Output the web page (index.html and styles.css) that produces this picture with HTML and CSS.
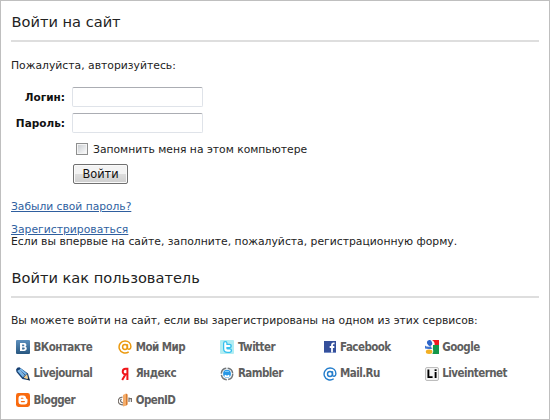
FILE: index.html
```html
<!DOCTYPE html>
<html lang="ru">
<head>
<meta charset="utf-8">
<title>Войти на сайт</title>
<link rel="stylesheet" href="styles.css">
</head>
<body>
<main class="panel">
  <h2>Войти на сайт</h2>
  <p class="intro">Пожалуйста, авторизуйтесь:</p>
  <form class="login">
    <label for="login">Логин:</label><input class="field" id="login" type="text">
    <label for="pass">Пароль:</label><input class="field" id="pass" type="password">
    <div class="remember"><input class="check" id="rem" type="checkbox"><label for="rem">Запомнить меня на этом компьютере</label></div>
    <button class="submit" type="button">Войти</button>
  </form>
  <p class="forgot"><a href="#">Забыли свой пароль?</a></p>
  <p class="register"><a href="#">Зарегистрироваться</a><br>Если вы впервые на сайте, заполните, пожалуйста, регистрационную форму.</p>
  <h2>Войти как пользователь</h2>
  <p class="services-intro">Вы можете войти на сайт, если вы зарегистрированы на одном из этих сервисов:</p>
  <ul class="services">
    <li><svg viewBox="0 0 14 14"><defs><linearGradient id="vk" x2="0" y2="1"><stop stop-color="#5c8fbd"/><stop offset="1" stop-color="#285780"/></linearGradient></defs><rect width="14" height="14" rx="1" fill="url(#vk)"/><path fill="#fff" fill-rule="evenodd" d="M4 3h4.2c2.4 0 2.9 2.7 1.2 3.6 2.2.8 1.7 4.4-1.2 4.4H4zM6.1 4.6v1.6h1.5c1 0 1-1.6 0-1.6zm0 3v1.8h1.8c1.2 0 1.2-1.8 0-1.8z"/></svg><span>ВКонтакте</span></li>
    <li><svg viewBox="0 0 14 14" fill="none" stroke="#eb9a10" stroke-width="1.5"><circle cx="7" cy="7" r="2.4"/><path d="M9.4 4.2v3.6c0 2.3 3.5 1.8 3.5-1C12.9 3.3 10.3 1 7 1a6 6 0 1 0 3.7 10.8"/></svg><span>Мой Мир</span></li>
    <li><svg viewBox="0 0 14 14"><rect width="14" height="14" rx="1" fill="#b2edf2"/><path d="M5.3 3.4v5c0 1.8.9 2.2 2.4 2.2h2.1M5.3 6h4.3" fill="none" stroke="#35c0ee" stroke-width="4.6" stroke-linecap="round"/><path d="M5.3 3.4v5c0 1.6.9 2.2 2.3 2.2h2.1M5.3 6h4.1" fill="none" stroke="#fff" stroke-width="2.1" stroke-linecap="round"/></svg><span>Twitter</span></li>
    <li><svg viewBox="0 0 14 14"><rect x="1" y="1" width="12" height="12" fill="#35509b"/><path d="M1 12h12v1H1z" fill="#7890c8"/><path d="M11.6 3.3h-1C9.4 3.3 9 4 9 5v7.5M6.7 7h4.6" fill="none" stroke="#fff" stroke-width="1.8"/></svg><span>Facebook</span></li>
    <li><svg viewBox="0 0 14 14"><path fill="#f01a20" d="M7 0h7v5H9.6C10 3 9 1 7 0z"/><path fill="#14974a" d="M8 5h6v9H7.3C9.4 11 7.2 9 8 7.3z"/><ellipse cx="4.6" cy="3" rx="2.5" ry="3" transform="rotate(-20 4.6 3)" fill="#2d65c9"/><path d="M0 5.5C1.4 7 4 6.8 6 6.3l1 2.6H3.5L0 8.5z" fill="#3f74cf"/><ellipse cx="4.1" cy="11.7" rx="3.3" ry="2.2" fill="#f2af24"/></svg><span>Google</span></li>
    <li><svg viewBox="0 0 14 14"><path d="M0 2.4Q1 .2 3.4.3L12 6.4l2 7.2-7.6-1.5L.5 5z" fill="#163e70"/><path d="M2 3.4 7.6 9.7M4 2.1l6.2 5.2" stroke="#79b8eb" stroke-width="2"/><path d="M3.2 3 8.8 8.7" stroke="#c5e3fa" stroke-width=".8"/><path d="m7.6 10.8 3.4-3.7 1.4 5.4z" fill="#f1cf91"/><path d="m11 12.4 1.5-1.7 1.3 2.8z" fill="#142437"/></svg><span>Livejournal</span></li>
    <li><svg viewBox="0 0 14 14" fill="none" stroke="#f01519" stroke-width="2"><path d="M9.4 13V1.8H7.7C3.8 1.8 3.8 7.3 7.4 7.3h2M7.4 7.5 4.2 13"/></svg><span>Яндекс</span></li>
    <li><svg viewBox="0 0 14 14"><circle cx="7" cy="7" r="5.7" fill="none" stroke="#73777a" stroke-width="1.5" stroke-dasharray="7.5 1.45"/><circle cx="7" cy="6.7" r="3.9" fill="#2797e6"/><path d="M4.5 10.2V8.4l1-.7 1.5 1 1.5-1 1 .7v1.8L8.5 10H5.5z" fill="#fff"/><path d="M5 4.4h4" stroke="#8bd2fa"/></svg><span>Rambler</span></li>
    <li><svg viewBox="0 0 14 14" fill="none" stroke="#237dcc" stroke-width="1.4"><circle cx="7" cy="7" r="2.5"/><path d="M9.5 4.2v3.6c0 2.3 3.4 1.8 3.4-1C12.9 3.3 10.3 1 7 1a6 6 0 1 0 3.7 10.8"/></svg><span>Mail.Ru</span></li>
    <li><svg viewBox="0 0 14 14"><rect x=".5" y=".5" width="13" height="13" rx="1.5" fill="#f4f4f4" stroke="#bdbdbd"/><path d="M3.4 2.6v7.5h4.2M10.6 5v6" fill="none" stroke="#000" stroke-width="1.9"/><path d="M9.6 2.3h2v1.7h-2z"/></svg><span>Liveinternet</span></li>
    <li><svg viewBox="0 0 14 14"><rect width="14" height="14" rx="2.4" fill="#f96a0e"/><path fill="#fff" fill-rule="evenodd" d="M5 2.5h2.5c1.7 0 2.5 1 2.5 2.6 0 .9 1.5.4 1.5 1.6v1.8c0 2-1 3-3 3H5.4c-2 0-2.9-1-2.9-3v-3c0-2 .8-3 2.5-3zm.4 2.2c-.8 0-.8 1.1 0 1.1h1.5c.8 0 .8-1.1 0-1.1zm0 3.4c-.8 0-.8 1.2 0 1.2h3c.8 0 .8-1.2 0-1.2z"/></svg><span>Blogger</span></li>
    <li><svg viewBox="0 0 14 14"><path d="M4.5 4.2C-1.2 4.8-1.2 11.6 5 11.8M3.6 6c-2 1.3-1 3.6 1.4 4M11 4.6V9m0-3.4h2.4V9" fill="none" stroke="#77706b" stroke-width="1.2"/><path d="m5 2 3-1.6v12.4L5 13.4z" fill="#f4ad6c"/><path d="m8 .4 1.6 1.2v10l-1.6 1.2z" fill="#d77b2e"/></svg><span>OpenID</span></li>
  </ul>
</main>
</body>
</html>
```
FILE: styles.css
```css
* { box-sizing: border-box; }
body { margin: 0; background: #fff; color: #222; font: 10.8px/14px "DejaVu Sans", sans-serif; }
.panel { height: 420px; padding: 0 10px; border: 1px solid #bfbfbf; overflow: hidden; }
p, h2, ul { margin: 0; padding: 0; }
h2 { height: 41px; padding: 11px 0 0 .5px; border-bottom: 2px solid #dedede; font-size: 14.6px; line-height: 20px; font-weight: normal; }
.intro { padding-top: 17px; height: 45px; }
.login { display: grid; grid-template-columns: 54px 131px; column-gap: 7px; grid-template-rows: 26px 29px 22px 20px; align-items: start; height: 113px; }
.login > label { font-size: 10.5px; font-weight: bold; color: #111; text-align: right; line-height: 21px; }
.field { width: 131px; height: 20px; margin: 0; border: 1px solid #dfe3e9; border-top-color: #abadb3; border-radius: 2px; background: #fff; }
.remember { grid-column: 2; display: flex; align-items: center; gap: 5px; padding-left: 4px; white-space: nowrap; line-height: 15px; font-size: 10.75px; }
.check { appearance: none; flex: none; width: 12px; height: 12px; margin: 0 0 2px; border: 1px solid #8e8f8f; background: linear-gradient(135deg, #c5c9cd, #fff); box-shadow: inset 0 0 0 1px #f4f4f4; }
.submit { grid-column: 2; width: 55px; height: 20px; margin-left: 1px; padding: 0; border: 1px solid #707070; border-radius: 2px; background: linear-gradient(#f3f3f3 0 50%, #dddddd 50%, #cfcfcf); box-shadow: inset 0 0 0 1px #fafafa; color: #111; font: 11.4px/17px "DejaVu Sans", sans-serif; }
a { color: #2f5f9f; }
.forgot { height: 24px; font-size: 10.7px; }
.register { height: 33px; line-height: 12px; }
.services-intro { padding-top: 16px; height: 42px; font-size: 10.75px; }
.services { display: grid; grid-template-columns: repeat(5, 102.2px); grid-auto-rows: 14px; row-gap: 12.5px; padding-left: 5px; list-style: none; }
.services li { display: flex; align-items: center; gap: 3.5px; color: #5e5e5e; font: bold 11.5px/15px "DejaVu Sans Condensed", "DejaVu Sans", sans-serif; letter-spacing: -.55px; }
.services svg { width: 14px; height: 14px; flex: none; }
```
